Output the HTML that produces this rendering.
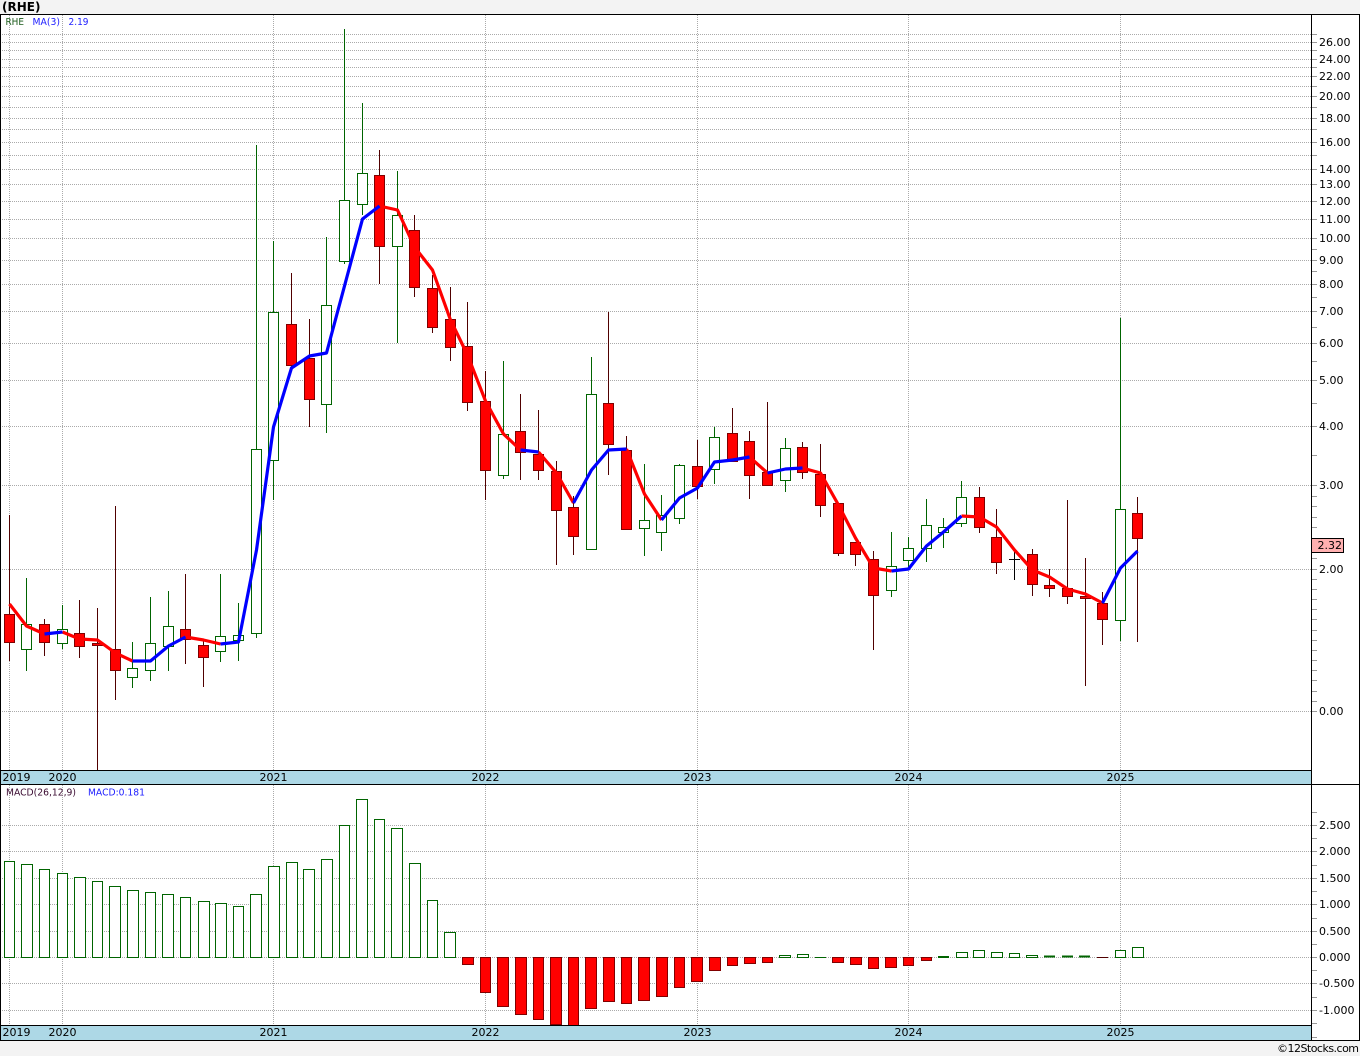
<!DOCTYPE html>
<html><head><meta charset="utf-8"><title>RHE</title>
<style>
html,body{margin:0;padding:0;background:#f3f3f3;width:1360px;height:1056px;overflow:hidden}
svg{display:block;position:absolute;left:0;top:0}
text{font-family:"DejaVu Sans","Liberation Sans",sans-serif;font-size:11px;fill:#000}
.c{shape-rendering:crispEdges}
</style></head><body>
<svg width="1360" height="1056" viewBox="0 0 1360 1056">
<rect width="1360" height="1056" fill="#f3f3f3"/>
<rect x="0" y="14" width="1360" height="1027" fill="#fff"/>
<text x="2" y="11" style="font-weight:bold;font-size:12px" fill="#000">(RHE)</text>

<g class="c" fill="none">
<path stroke="#aaa" stroke-dasharray="1 1" d="M0 34.5H1311M0 42.5H1311M0 50.5H1311M0 59.5H1311M0 67.5H1311M0 76.5H1311M0 86.5H1311M0 96.5H1311M0 107.5H1311M0 118.5H1311M0 129.5H1311M0 142.5H1311M0 155.5H1311M0 169.5H1311M0 184.5H1311M0 201.5H1311M0 219.5H1311M0 238.5H1311M0 260.5H1311M0 284.5H1311M0 311.5H1311M0 343.5H1311M0 380.5H1311M0 426.5H1311M0 485.5H1311M0 569.5H1311M0 711.5H1311M0 825.5H1311M0 851.5H1311M0 878.5H1311M0 904.5H1311M0 931.5H1311M0 957.5H1311M0 983.5H1311M0 1010.5H1311"/>
<path stroke="#aaa" stroke-dasharray="1 1" d="M9.5 15V770M62.5 15V770M273.5 15V770M485.5 15V770M697.5 15V770M908.5 15V770M1120.5 15V770M9.5 785V1025M62.5 785V1025M273.5 785V1025M485.5 785V1025M697.5 785V1025M908.5 785V1025M1120.5 785V1025"/>
<path stroke="#999" d="M1312 34.5h5M1312 42.5h5M1312 50.5h5M1312 59.5h5M1312 67.5h5M1312 76.5h5M1312 86.5h5M1312 96.5h5M1312 107.5h5M1312 118.5h5M1312 129.5h5M1312 142.5h5M1312 155.5h5M1312 169.5h5M1312 184.5h5M1312 201.5h5M1312 219.5h5M1312 238.5h5M1312 249.5h5M1312 260.5h5M1312 271.5h5M1312 284.5h5M1312 297.5h5M1312 311.5h5M1312 327.5h5M1312 343.5h5M1312 361.5h5M1312 380.5h5M1312 403.5h5M1312 426.5h5M1312 455.5h5M1312 485.5h5M1312 496.5h5M1312 506.5h5M1312 517.5h5M1312 527.5h5M1312 558.5h5M1312 569.5h5M1312 579.5h5M1312 589.5h5M1312 599.5h5M1312 609.5h5M1312 619.5h5M1312 630.5h5M1312 640.5h5M1312 650.5h5M1312 660.5h5M1312 670.5h5M1312 680.5h5M1312 691.5h5M1312 701.5h5M1312 711.5h5M1312 812.5h5M1312 825.5h5M1312 838.5h5M1312 851.5h5M1312 865.5h5M1312 878.5h5M1312 891.5h5M1312 904.5h5M1312 918.5h5M1312 931.5h5M1312 944.5h5M1312 957.5h5M1312 970.5h5M1312 983.5h5M1312 997.5h5M1312 1010.5h5M1312 1023.5h5M1312 1037.5h5"/>

<path stroke="#500000" d="M9.5 515V661M44.5 619V656M79.5 600V658M97.5 608V770M115.5 506V700M185.5 574V664M203.5 639V687M291.5 273V368M309.5 319V427M379.5 150V284M414.5 215V297M432.5 275V333M450.5 287V361M467.5 302V411M485.5 371V500M520.5 394V480M538.5 410V480M556.5 461V565M573.5 496V555M608.5 312V475M626.5 436V529M697.5 440V499M732.5 408V461M749.5 431V499M767.5 402V485M802.5 442V479M820.5 444V517M838.5 503V556M855.5 542V566M873.5 551V650M979.5 487V533M996.5 509V574M1032.5 549V596M1049.5 569V597M1067.5 500V604M1085.5 558V686M1102.5 592V645M1137.5 497V642"/>
<path stroke="#006400" d="M26.5 578V671M62.5 605V649M132.5 642V688M150.5 597V681M168.5 591V671M220.5 574V662M238.5 603V661M256.5 145V638M273.5 241V500M326.5 237V433M344.5 29V264M362.5 103V215M397.5 171V343M503.5 361V479M591.5 357V549M644.5 464V556M661.5 495V551M679.5 464V524M714.5 427V484M785.5 438V492M891.5 532V597M908.5 537V569M926.5 499V562M943.5 518V548M961.5 481V527M1120.5 318V641"/>
<path stroke="#000" d="M1014.5 550V580M1009 559.5H1020"/>

<path fill="#fff" stroke="#006400" d="M21.5 624.5h10v25h-10zM57.5 629.5h10v14h-10zM127.5 668.5h10v9h-10zM145.5 643.5h10v27h-10zM163.5 626.5h10v20h-10zM215.5 636.5h10v15h-10zM233.5 635.5h10v5h-10zM251.5 449.5h10v184h-10zM268.5 312.5h10v148h-10zM321.5 305.5h10v99h-10zM339.5 200.5h10v61h-10zM357.5 173.5h10v31h-10zM392.5 215.5h10v31h-10zM498.5 434.5h10v41h-10zM586.5 394.5h10v155h-10zM639.5 520.5h10v8h-10zM656.5 515.5h10v17h-10zM674.5 465.5h10v53h-10zM709.5 437.5h10v32h-10zM780.5 448.5h10v32h-10zM886.5 566.5h10v24h-10zM903.5 548.5h10v12h-10zM921.5 525.5h10v23h-10zM938.5 527.5h10v5h-10zM956.5 497.5h10v26h-10zM1115.5 509.5h10v111h-10z"/>
<path fill="#f00" stroke="#800000" d="M4.5 614.5h10v28h-10zM39.5 624.5h10v18h-10zM74.5 633.5h10v13h-10zM92.5 643.5h10v2h-10zM110.5 649.5h10v21h-10zM180.5 629.5h10v10h-10zM198.5 645.5h10v12h-10zM286.5 324.5h10v41h-10zM304.5 358.5h10v41h-10zM374.5 175.5h10v71h-10zM409.5 230.5h10v57h-10zM427.5 288.5h10v39h-10zM445.5 319.5h10v28h-10zM462.5 346.5h10v56h-10zM480.5 401.5h10v69h-10zM515.5 431.5h10v21h-10zM533.5 454.5h10v16h-10zM551.5 471.5h10v39h-10zM568.5 507.5h10v29h-10zM603.5 403.5h10v41h-10zM621.5 450.5h10v79h-10zM692.5 466.5h10v20h-10zM727.5 433.5h10v28h-10zM744.5 441.5h10v34h-10zM762.5 472.5h10v13h-10zM797.5 447.5h10v25h-10zM815.5 474.5h10v31h-10zM833.5 503.5h10v50h-10zM850.5 542.5h10v12h-10zM868.5 559.5h10v36h-10zM974.5 497.5h10v30h-10zM991.5 537.5h10v25h-10zM1027.5 554.5h10v30h-10zM1044.5 585.5h10v3h-10zM1062.5 588.5h10v8h-10zM1080.5 596.5h10v2h-10zM1097.5 603.5h10v16h-10zM1132.5 513.5h10v25h-10z"/>

<path fill="#fff" stroke="#006400" d="M4.5 861.5h10v96h-10zM21.5 864.5h11v93h-11zM39.5 869.5h10v88h-10zM57.5 873.5h10v84h-10zM74.5 877.5h11v80h-11zM92.5 881.5h10v76h-10zM109.5 886.5h11v71h-11zM127.5 890.5h11v67h-11zM145.5 892.5h10v65h-10zM162.5 894.5h11v63h-11zM180.5 897.5h10v60h-10zM198.5 901.5h11v56h-11zM215.5 903.5h11v54h-11zM233.5 906.5h10v51h-10zM250.5 894.5h11v63h-11zM268.5 866.5h11v91h-11zM286.5 862.5h11v95h-11zM303.5 869.5h11v88h-11zM321.5 859.5h11v98h-11zM339.5 825.5h10v132h-10zM356.5 799.5h11v158h-11zM374.5 819.5h10v138h-10zM391.5 828.5h11v129h-11zM409.5 863.5h11v94h-11zM427.5 900.5h10v57h-10zM444.5 932.5h11v25h-11zM779.5 955.5h11v2h-11zM797.5 954.5h11v3h-11zM956.5 952.5h11v5h-11zM973.5 950.5h11v7h-11zM991.5 952.5h11v5h-11zM1009.5 953.5h10v4h-10zM1026.5 955.5h11v2h-11zM1115.5 950.5h10v7h-10zM1132.5 947.5h11v10h-11z"/>
<path fill="#f00" stroke="#800000" d="M462.5 957.5h11v7h-11zM480.5 957.5h10v35h-10zM497.5 957.5h11v49h-11zM515.5 957.5h11v57h-11zM533.5 957.5h10v62h-10zM550.5 957.5h11v67h-11zM568.5 957.5h10v68h-10zM585.5 957.5h11v51h-11zM603.5 957.5h11v44h-11zM621.5 957.5h10v46h-10zM638.5 957.5h11v43h-11zM656.5 957.5h11v39h-11zM674.5 957.5h10v30h-10zM691.5 957.5h11v24h-11zM709.5 957.5h11v13h-11zM727.5 957.5h10v8h-10zM744.5 957.5h11v6h-11zM762.5 957.5h10v5h-10zM832.5 957.5h11v5h-11zM850.5 957.5h11v7h-11zM868.5 957.5h10v11h-10zM885.5 957.5h11v10h-11zM903.5 957.5h10v8h-10zM921.5 957.5h10v3h-10z"/>
<path stroke="#006400" d="M815 957.5h11"/>
<path stroke="#006400" stroke-width="2" d="M938 957h11M1044 956.5h11M1062 956.5h11M1079 956.5h11"/>
<path stroke="#500000" d="M1097 957.5h11"/>
</g>

<g fill="none" stroke-width="3.2" stroke-linejoin="round" stroke-linecap="butt">
<g stroke="#f00">
<polyline points="9.5,604 26.5,626 44.5,634"/>
<polyline points="62.5,632 79.5,639 97.5,640 115.5,653 132.5,661"/>
<polyline points="185.5,637 203.5,640 220.5,644"/>
<polyline points="379.5,206 397.5,210 414.5,247 432.5,270 450.5,320 467.5,355 485.5,401 503.5,434 520.5,450"/>
<polyline points="538.5,452 556.5,473 573.5,503"/>
<polyline points="626.5,449 644.5,494 661.5,520"/>
<polyline points="749.5,457 767.5,473"/>
<polyline points="802.5,468 820.5,473 838.5,505 855.5,538 873.5,568 891.5,571"/>
<polyline points="961.5,516 979.5,517 996.5,527 1014.5,550 1032.5,570 1049.5,577 1067.5,589 1085.5,594 1102.5,603"/>
</g>
<g stroke="#00f">
<polyline points="44.5,634 62.5,632"/>
<polyline points="132.5,661 150.5,661 168.5,646 185.5,637"/>
<polyline points="220.5,644 238.5,642 256.5,550 273.5,427 291.5,368 309.5,356 326.5,353 344.5,286 362.5,219 379.5,206"/>
<polyline points="520.5,450 538.5,452"/>
<polyline points="573.5,503 591.5,470 608.5,450 626.5,449"/>
<polyline points="661.5,520 679.5,498 697.5,488 714.5,462 732.5,460 749.5,457"/>
<polyline points="767.5,473 785.5,469 802.5,468"/>
<polyline points="891.5,571 908.5,569 926.5,546 943.5,532 961.5,516"/>
<polyline points="1102.5,603 1120.5,568 1137.5,551"/>
</g>
</g>

<g class="c">
<rect x="0" y="770" width="1311" height="14" fill="#add8e6"/>
<rect x="0" y="1025" width="1311" height="15" fill="#add8e6"/>
<path fill="none" stroke="#000" d="M0 14.5H1360M0.5 14V1040M1311.5 14V1040M1359.5 14V1041M0 770.5H1311M0 784.5H1360M0 1025.5H1311M0 1040.5H1360"/>
<rect x="1311.5" y="538.5" width="32" height="14" fill="#ffb0b0" stroke="#000"/>
</g>

<text x="5.5" y="25" style="font-size:10px;fill:#1a5a1a" textLength="18.5" lengthAdjust="spacingAndGlyphs">RHE</text>
<text x="32.5" y="25" style="font-size:10px;fill:#2020ff" textLength="27.5" lengthAdjust="spacingAndGlyphs">MA(3)</text>
<text x="68.5" y="25" style="font-size:10px;fill:#2020ff" textLength="20" lengthAdjust="spacingAndGlyphs">2.19</text>
<text x="6" y="795.5" style="font-size:10px;fill:#3a0a30" textLength="70" lengthAdjust="spacingAndGlyphs">MACD(26,12,9)</text>
<text x="88" y="795.5" style="font-size:10px;fill:#2020ff" textLength="57" lengthAdjust="spacingAndGlyphs">MACD:0.181</text>

<text x="1319" y="46">26.00</text><text x="1319" y="63">24.00</text><text x="1319" y="80">22.00</text><text x="1319" y="100">20.00</text><text x="1319" y="122">18.00</text><text x="1319" y="146">16.00</text><text x="1319" y="173">14.00</text><text x="1319" y="188">13.00</text><text x="1319" y="205">12.00</text><text x="1319" y="223">11.00</text><text x="1319" y="242">10.00</text>
<text x="1319" y="264">9.00</text><text x="1319" y="288">8.00</text><text x="1319" y="315">7.00</text><text x="1319" y="347">6.00</text><text x="1319" y="384">5.00</text><text x="1319" y="430">4.00</text><text x="1319" y="489">3.00</text><text x="1319" y="573">2.00</text><text x="1319" y="715">0.00</text>
<text x="1317.5" y="549">2.32</text>
<text x="1319" y="829">2.500</text><text x="1319" y="855">2.000</text><text x="1319" y="882">1.500</text><text x="1319" y="908">1.000</text><text x="1319" y="935">0.500</text><text x="1319" y="961">0.000</text><text x="1319" y="987">-0.500</text><text x="1319" y="1014">-1.000</text>

<text x="2.5" y="781">2019</text><text x="48.5" y="781">2020</text><text x="259.5" y="781">2021</text><text x="471.5" y="781">2022</text><text x="683.5" y="781">2023</text><text x="894.5" y="781">2024</text><text x="1106.5" y="781">2025</text>
<text x="2.5" y="1036">2019</text><text x="48.5" y="1036">2020</text><text x="259.5" y="1036">2021</text><text x="471.5" y="1036">2022</text><text x="683.5" y="1036">2023</text><text x="894.5" y="1036">2024</text><text x="1106.5" y="1036">2025</text>

<text x="1277" y="1052" textLength="82">©12Stocks.com</text>
</svg>
</body></html>
